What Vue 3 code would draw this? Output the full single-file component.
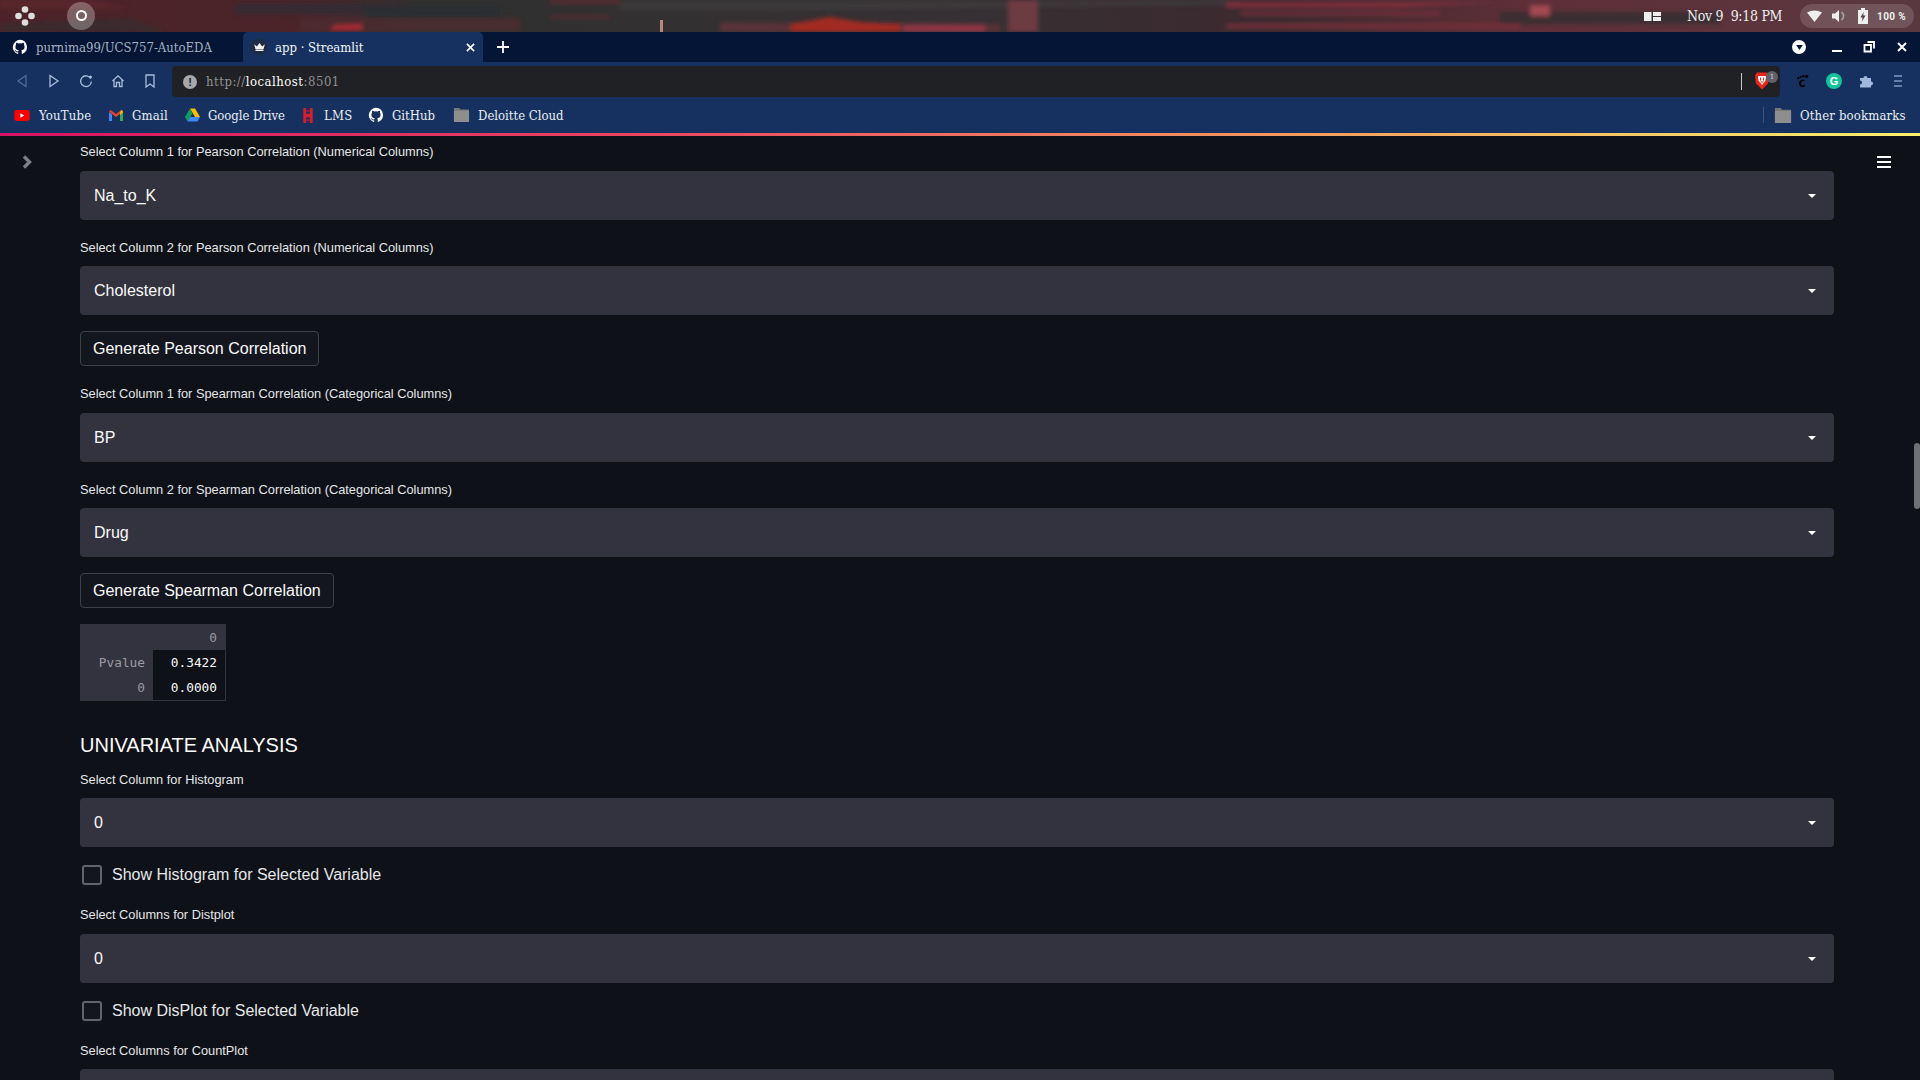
<script setup>
const bookmarks = [
  { key: 'yt', label: 'YouTube' },
  { key: 'gm', label: 'Gmail' },
  { key: 'gd', label: 'Google Drive' },
  { key: 'lms', label: 'LMS' },
  { key: 'gh', label: 'GitHub' },
  { key: 'fd', label: 'Deloitte Cloud' },
]
const ghPath = 'M12 1.3a10.9 10.9 0 0 0-3.4 21.2c.5.1.7-.2.7-.5v-2c-3 .7-3.7-1.3-3.7-1.3-.5-1.3-1.2-1.6-1.2-1.6-1-.7.1-.7.1-.7 1.1.1 1.7 1.1 1.7 1.1 1 1.7 2.6 1.2 3.2.9.1-.7.4-1.2.7-1.5-2.4-.3-5-1.2-5-5.4 0-1.2.4-2.2 1.1-2.9-.1-.3-.5-1.4.1-2.9 0 0 .9-.3 3 1.1a10.400 10.400 0 0 1 5.400 0c2.100-1.400 3-1.100 3-1.100.6 1.500.2 2.600.1 2.900.7.800 1.100 1.700 1.100 2.900 0 4.200-2.600 5.100-5 5.400.4.300.7 1 .7 2v3c0 .3.2.6.7.5A10.900 10.900 0 0 0 12 1.300z'
</script>

<template>
  <div class="screen">
    <header class="desktop-bar">
      <svg class="wall" viewBox="0 0 1920 32" preserveAspectRatio="none" aria-hidden="true">
        <defs>
          <filter id="soft"><feGaussianBlur stdDeviation="2"/></filter>
          <linearGradient id="wallgrad" x1="0" x2="1" y1="0" y2="0">
            <stop offset="0" stop-color="#4d2329"/>
            <stop offset=".16" stop-color="#4a2429"/>
            <stop offset=".22" stop-color="#30302f"/>
            <stop offset=".5" stop-color="#363034"/>
            <stop offset=".66" stop-color="#3c2a2f"/>
            <stop offset=".8" stop-color="#5f2f38"/>
            <stop offset="1" stop-color="#5a3840"/>
          </linearGradient>
        </defs>
        <rect width="1920" height="32" fill="url(#wallgrad)"/>
        <g filter="url(#soft)">
          <path d="M0 0H90L130 8H0Z" fill="#5a252b"/>
          <path d="M0 24L130 18 165 32H0Z" fill="#3a2a2d"/>
          <path d="M235 3H400V14H235Z" fill="#352c30"/>
          <path d="M365 6H500V18H365Z" fill="#2c2f30"/>
          <path d="M300 18H520V32H300Z" fill="#4e2b30" opacity=".8"/>
          <path d="M335 25L362 24V30H330Z" fill="#a82a34"/>
          <path d="M550 0H620V3H550ZM550 16H610V18H550Z" fill="#6a2c33"/>
          <path d="M620 2H1000L1240 0V4L800 10H620Z" fill="#3d3a3b"/>
          <path d="M720 22L1000 24V32H720Z" fill="#583038"/>
          <path d="M791 24L830 17 860 22 900 24V32H791Z" fill="#a32a24"/>
          <path d="M903 25H985V32H903Z" fill="#923544"/>
          <path d="M1008 0H1038V32H1008Z" fill="#6d3a42"/>
          <path d="M1226 2H1500L1400 8H1226ZM1240 12H1440V15H1240ZM1226 24H1520V28H1226Z" fill="#7c2f3a"/>
          <path d="M1500 12H1720V24H1500Z" fill="#3a2f33"/>
          <path d="M1530 5H1550V16H1530Z" fill="#a04a50"/>
        </g>
        <path d="M660 20H663V32H660Z" fill="#b8847f"/>
      </svg>
      <div class="desk-left">
        <svg class="gnome" viewBox="0 0 20 20" aria-hidden="true">
          <circle cx="10" cy="3.500" r="3.300" fill="#dedede"/><circle cx="3.500" cy="10" r="3.300" fill="#dedede"/>
          <circle cx="16.500" cy="10" r="3.300" fill="#dedede"/><circle cx="10" cy="16.500" r="3.300" fill="#dedede"/>
        </svg>
        <span class="circle-btn"><i></i></span>
      </div>
      <div class="desk-right">
        <svg class="layout-ic" viewBox="0 0 17 9" aria-hidden="true"><path d="M0 0h7.500v9H0zM9 0h8v4H9zM9 5h8v4H9z" fill="#eee"/></svg>
        <span class="clock">Nov 9&nbsp; 9:18 PM</span>
        <div class="tray">
          <svg class="t-wifi" viewBox="0 0 15 12" aria-hidden="true"><path d="M0 2.500Q7.500-1.500 15 2.500L7.500 12Z" fill="#eee"/></svg>
          <svg class="t-spk" viewBox="0 0 14 14" aria-hidden="true"><path d="M0 4.500h3L7 1v12L3 9.500H0Z" fill="#eee"/><path d="M9.500 3a5 5 0 0 1 0 8" stroke="#aaa" fill="none" stroke-width="1.500"/></svg>
          <svg class="t-bat" viewBox="0 0 10 16" aria-hidden="true"><path d="M0 2h3V0h4v2h3V16H0Z" fill="#eee"/><path d="M5.500 4L2.500 9.500H4.500L4 13.500 7.500 7.500H5.300Z" fill="#55404a"/></svg>
          <span class="pct">100 %</span>
        </div>
      </div>
    </header>

    <div class="tabs">
      <div class="tab inactive">
        <svg class="tab-ic" viewBox="0 0 24 24" aria-hidden="true"><path :d="ghPath" fill="#fff"/></svg>
        <span>purnima99/UCS757-AutoEDA</span>
      </div>
      <div class="tab active">
        <span class="crown-wrap">
          <svg viewBox="0 0 12 9" aria-hidden="true"><path d="M0 1.500L3 4 6 0 9 4 12 1.500 10.500 7H1.500ZM1.500 7.700h9V9h-9Z" fill="#f3f3f3"/></svg>
        </span>
        <span>app · Streamlit</span>
        <svg class="tab-x" viewBox="0 0 10 10" aria-hidden="true"><path d="M1 1l8 8M9 1L1 9" stroke="#fff" stroke-width="1.800"/></svg>
      </div>
      <svg class="newtab" viewBox="0 0 12 12" aria-hidden="true"><path d="M6 0v12M0 6h12" stroke="#fff" stroke-width="1.800"/></svg>
      <div class="win-ctrls">
        <span class="dl"><svg viewBox="0 0 8 6" aria-hidden="true"><path d="M0 0h8L4 6Z" fill="#04173a"/></svg></span>
        <svg class="w-ic w-min" viewBox="0 0 12 12" aria-hidden="true"><path d="M1 10h10" stroke="#fff" stroke-width="2"/></svg>
        <svg class="w-ic w-res" viewBox="0 0 12 12" aria-hidden="true"><path d="M4.500 1h6.500v6.500M1.500 4h6.500v6.500h-6.500Z" fill="none" stroke="#fff" stroke-width="1.800"/></svg>
        <svg class="w-ic w-cls" viewBox="0 0 12 12" aria-hidden="true"><path d="M2 2l8 8M10 2l-8 8" stroke="#fff" stroke-width="1.900"/></svg>
      </div>
    </div>

    <div class="toolbar">
      <div class="nav">
        <svg viewBox="0 0 14 14" aria-hidden="true"><path d="M11 1.500V12.500L3 7Z" fill="none" stroke="#4f6b95" stroke-width="1.300"/></svg>
        <svg viewBox="0 0 14 14" aria-hidden="true"><path d="M3 1.500V12.500L11 7Z" fill="none" stroke="#a9bcd9" stroke-width="1.300"/></svg>
        <svg viewBox="0 0 14 14" aria-hidden="true"><path d="M11.700 4.500A5.400 5.400 0 1 0 12.400 7.500" fill="none" stroke="#a9bcd9" stroke-width="1.300"/><circle cx="11.500" cy="3" r="1.500" fill="#a9bcd9"/></svg>
        <svg viewBox="0 0 14 14" aria-hidden="true"><path d="M1.500 7L7 1.800 12.500 7M3 6V12.500H5.500V8.500H8.500V12.500H11V6" fill="none" stroke="#a9bcd9" stroke-width="1.300"/></svg>
        <svg viewBox="0 0 14 14" aria-hidden="true"><path d="M3 1H11V13L7 10 3 13Z" fill="none" stroke="#a9bcd9" stroke-width="1.300"/></svg>
      </div>
      <div class="urlbar">
        <span class="info">!</span>
        <span class="url"><span class="dim">http://</span>localhost<span class="dim">:8501</span></span>
        <span class="url-sep"></span>
        <span class="brave">
          <svg viewBox="0 0 14 17" aria-hidden="true">
            <path d="M2 0H12L14 3 13 11 7 17 1 11 0 3Z" fill="#e8261c"/>
            <path d="M3 3.500H11L10.500 8 7 12.500 3.500 8Z" fill="#fff"/>
            <path d="M5.500 5V8M8.500 5V8M5.500 9.500H8.500" stroke="#e8261c"/>
          </svg>
          <b>1</b>
        </span>
      </div>
      <div class="ext">
        <svg class="paw" viewBox="0 0 14 14" aria-hidden="true"><path d="M9 6a4 4 0 1 0 1 6.500L9.500 11A2.300 2.300 0 1 1 9 7.500Z" fill="#000"/><circle cx="2.500" cy="4" r="1.200"/><circle cx="5" cy="2.500" r="1.200"/><circle cx="8" cy="1.800" r="1.300"/><circle cx="11.500" cy="2" r="1.700"/></svg>
        <span class="gram">G</span>
        <svg class="puzzle" viewBox="0 0 14 14" aria-hidden="true"><path d="M1 4H4.500A2 2 0 1 1 8.500 4H12V7.500A2 2 0 1 1 12 11.500V13.500H1V10.500A2 2 0 1 0 1 6.500Z" fill="#a0b8dc"/></svg>
        <svg class="kebab" viewBox="0 0 10 12" aria-hidden="true"><path d="M1 1h8M1 6h8M1 11h8" stroke="#7f9cc6" stroke-width="1.500"/></svg>
      </div>
    </div>

    <nav class="bookmarks">
      <div v-for="b in bookmarks" :key="b.key" class="bm" :class="'bm-' + b.key">
        <svg v-if="b.key === 'yt'" viewBox="0 0 14 10" aria-hidden="true"><rect width="14" height="10" rx="2.500" fill="#f00"/><path d="M5.500 3v4L9 5Z" fill="#fff"/></svg>
        <svg v-else-if="b.key === 'gm'" viewBox="0 0 14 11" aria-hidden="true"><path d="M0 2V11H3V4.500Z" fill="#4285f4"/><path d="M11 4.500V11H14V2Z" fill="#34a853"/><path d="M0 1.500L7 7 14 1.500 12.500 0 7 4 1.500 0Z" fill="#ea4335"/><path d="M11 3V5L14 2.500C14 1 13 0 12 0Z" fill="#fbbc04"/></svg>
        <svg v-else-if="b.key === 'gd'" viewBox="0 0 16 14" aria-hidden="true"><path d="M5.300 0H10.700L16 9H10.700Z" fill="#fbbc04"/><path d="M5.300 0L0 9 2.700 14 8 5Z" fill="#0f9d58"/><path d="M5.300 9H16L13.300 14H2.700Z" fill="#4285f4"/></svg>
        <svg v-else-if="b.key === 'lms'" viewBox="0 0 10 16" aria-hidden="true"><path d="M0 0H3V6H7V0H10V16H7V10H3V16H0Z" fill="#d81e2c"/><path d="M3 2H7V4H3ZM3 12H7V14H3Z" fill="#d81e2c" opacity=".6"/></svg>
        <svg v-else-if="b.key === 'gh'" viewBox="0 0 24 24" aria-hidden="true"><path :d="ghPath" fill="#fff"/></svg>
        <svg v-else viewBox="0 0 14 13" aria-hidden="true"><path d="M0 0H5L6 1.500H14V13H0Z" fill="#777"/><path d="M0 2.500H14V13H0Z" fill="#8e8e8e"/></svg>
        <span>{{ b.label }}</span>
      </div>
      <span class="bm-sep"></span>
      <div class="bm bm-other">
        <svg viewBox="0 0 14 13" aria-hidden="true"><path d="M0 0H5L6 1.500H14V13H0Z" fill="#777"/><path d="M0 2.500H14V13H0Z" fill="#8e8e8e"/></svg>
        <span>Other bookmarks</span>
      </div>
    </nav>
    <div class="rainbow"></div>

    <main class="page">
      <svg class="side-chev" viewBox="0 0 10 14" aria-hidden="true"><path d="M2 1.500L7.500 7 2 12.500" fill="none" stroke="#7d7f86" stroke-width="3.400"/></svg>
      <svg class="hamb" viewBox="0 0 14 12" aria-hidden="true"><path d="M0 1h14M0 6h14M0 11h14" stroke="#fff" stroke-width="1.800"/></svg>
      <div class="scrollbar"></div>

      <section class="content">
        <label class="lbl first">Select Column 1 for Pearson Correlation (Numerical Columns)</label>
        <div class="select"><span>Na_to_K</span><i class="caret"></i></div>
        <label class="lbl">Select Column 2 for Pearson Correlation (Numerical Columns)</label>
        <div class="select"><span>Cholesterol</span><i class="caret"></i></div>
        <button class="btn">Generate Pearson Correlation</button>

        <label class="lbl">Select Column 1 for Spearman Correlation (Categorical Columns)</label>
        <div class="select"><span>BP</span><i class="caret"></i></div>
        <label class="lbl">Select Column 2 for Spearman Correlation (Categorical Columns)</label>
        <div class="select"><span>Drug</span><i class="caret"></i></div>
        <button class="btn">Generate Spearman Correlation</button>

        <table class="df">
          <thead><tr><th class="blank"></th><th>0</th></tr></thead>
          <tbody>
            <tr><th>Pvalue</th><td>0.3422</td></tr>
            <tr><th>0</th><td>0.0000</td></tr>
          </tbody>
        </table>

        <h2 class="heading">UNIVARIATE ANALYSIS</h2>

        <label class="lbl tight">Select Column for Histogram</label>
        <div class="select"><span>0</span><i class="caret"></i></div>
        <div class="check"><i class="box"></i><span>Show Histogram for Selected Variable</span></div>
        <label class="lbl after-check">Select Columns for Distplot</label>
        <div class="select"><span>0</span><i class="caret"></i></div>
        <div class="check"><i class="box"></i><span>Show DisPlot for Selected Variable</span></div>
        <label class="lbl after-check last">Select Columns for CountPlot</label>
        <div class="select"></div>
      </section>
    </main>
  </div>
</template>

<style>
html, body { margin: 0; background: #0e1117; overflow: hidden; }
</style>

<style scoped>
.screen {
  width: 1920px;
  height: 1080px;
  display: flex;
  flex-direction: column;
  overflow: hidden;
  background: #0e1117;
  font-family: "DejaVu Serif", serif;
  font-stretch: condensed;
}
.desktop-bar {
  height: 32px;
  flex: none;
  display: flex;
  justify-content: space-between;
  align-items: center;
  position: relative;
  background: #4a2a2e;
}
.wall { position: absolute; inset: 0; width: 100%; height: 100%; }
.desk-left { position: relative; display: flex; align-items: center; padding-left: 15px; }
.gnome { width: 20px; height: 20px; }
.circle-btn {
  margin-left: 32px;
  width: 28px;
  height: 28px;
  margin-top: -1px;
  border-radius: 50%;
  background: rgba(255,255,255,.28);
  display: flex;
  align-items: center;
  justify-content: center;
}
.circle-btn i { width: 7px; height: 7px; border: 2.500px solid #fff; border-radius: 50%; }
.desk-right { position: relative; display: flex; align-items: center; padding-right: 6px; color: #eee; }
.layout-ic { width: 17px; height: 9px; margin-right: 26px; }
.clock { font-size: 14px; margin-right: 19px; width: 94px; white-space: nowrap; letter-spacing: -.3px; }
.tray {
  width: 114px;
  height: 24px;
  border-radius: 12px;
  background: rgba(255,255,255,.14);
  display: flex;
  align-items: center;
  padding-left: 7px;
  box-sizing: border-box;
}
.t-wifi { width: 15px; height: 12px; margin-right: 10px; }
.t-spk { width: 14px; height: 14px; margin-right: 12px; }
.t-bat { width: 10px; height: 16px; margin-right: 9px; }
.pct { font: 700 10px "Roboto", sans-serif; letter-spacing: .4px; white-space: nowrap; font-stretch: normal; }

.tabs { height: 30px; flex: none; background: #041536; display: flex; align-items: center; }
.tab { height: 30px; display: flex; align-items: center; box-sizing: border-box; font-size: 13px; white-space: nowrap; }
.tab.inactive { width: 243px; padding-left: 12px; color: #a7b1c2; }
.tab-ic { width: 16px; height: 16px; margin-right: 8px; flex: none; }
.tab.active { width: 240px; padding: 0 8px; background: #16315f; color: #f2f4f8; border-radius: 5px 5px 0 0; }
.crown-wrap { width: 16px; height: 16px; border-radius: 50%; background: #1e2b42; display: flex; align-items: center; justify-content: center; margin-right: 8px; }
.crown-wrap svg { width: 11px; height: 8px; }
.tab-x { width: 9px; height: 9px; margin-left: auto; }
.newtab { width: 12px; height: 12px; margin-left: 14px; }
.win-ctrls { margin-left: auto; display: flex; align-items: center; height: 30px; padding-right: 12px; }
.dl { width: 14px; height: 14px; border-radius: 50%; background: #fff; display: flex; align-items: center; justify-content: center; }
.dl svg { width: 7px; height: 5px; }
.w-ic { width: 12px; height: 12px; }
.w-min { margin-left: 25px; }
.w-res { margin-left: 20px; }
.w-cls { margin-left: 21px; }

.toolbar { height: 37px; flex: none; background: #16315f; display: flex; align-items: flex-start; box-sizing: border-box; padding-top: 4px; }
.nav { width: 172px; height: 31px; flex: none; display: flex; align-items: center; gap: 18px; padding-left: 15px; box-sizing: border-box; }
.nav svg { width: 14px; height: 14px; flex: none; margin-top: -1px; }
.urlbar {
  width: 1608px;
  height: 31px;
  flex: none;
  box-sizing: border-box;
  border-radius: 4px;
  background: #202124;
  display: flex;
  align-items: center;
  padding-left: 11px;
}
.info { width: 14px; height: 14px; border-radius: 50%; background: #a6a8ab; color: #202124; font: 700 11px/14px "Liberation Sans", sans-serif; text-align: center; }
.url { margin-left: 9px; font-size: 13px; letter-spacing: .5px; color: #fff; margin-top: -1px; }
.dim { color: #8f9194; }
.url-sep { margin-left: auto; width: 1px; height: 17px; background: #c8c8c8; }
.brave { position: relative; margin: 0 2px 0 13px; width: 23px; height: 19px; display: block; }
.brave svg { width: 14px; height: 18px; position: absolute; left: 0; top: 0; }
.brave b { position: absolute; right: 0; top: -1px; width: 12px; height: 12px; border-radius: 50%; background: #5f6068; color: #ddd; font: 400 7px/12px "DejaVu Serif", serif; text-align: center; }
.ext { flex: 1; display: flex; align-items: center; height: 31px; padding: 0 0 1px 16px; box-sizing: border-box; }
.paw { width: 13px; height: 14px; flex: none; }
.gram { margin-left: 17px; width: 16px; height: 16px; flex: none; border-radius: 50%; background: #15c39a; color: #fff; font: 700 11px/16px "Liberation Sans", sans-serif; text-align: center; }
.puzzle { margin-left: 17px; width: 14px; height: 14px; flex: none; }
.kebab { margin-left: 20px; width: 10px; height: 12px; flex: none; }

.bookmarks { height: 34px; flex: none; background: #16315f; display: flex; align-items: center; padding: 0 15px 2px 14px; box-sizing: border-box; color: #e9edf3; font-size: 13px; white-space: nowrap; }
.bm { display: flex; align-items: center; }
.bm svg { flex: none; }
.bm-yt svg { width: 16px; height: 11px; margin-right: 9px; }
.bm-yt span { width: 53px; letter-spacing: .2px; }
.bm-gm { margin-left: 17px; }
.bm-gm svg { width: 14px; height: 11px; margin-right: 9px; }
.bm-gm span { width: 36px; letter-spacing: .2px; }
.bm-gd { margin-left: 17px; }
.bm-gd svg { width: 15px; height: 14px; margin-right: 8px; }
.bm-gd span { width: 75px; letter-spacing: -.05px; }
.bm-lms { margin-left: 20px; }
.bm-lms svg { width: 10px; height: 15px; margin-right: 11px; }
.bm-lms span { width: 28px; letter-spacing: .3px; }
.bm-gh { margin-left: 16px; }
.bm-gh svg { width: 16px; height: 16px; margin-right: 8px; }
.bm-gh span { width: 43px; }
.bm-fd { margin-left: 18px; }
.bm-fd svg { width: 17px; height: 14px; margin-right: 8px; }
.bm-sep { margin-left: auto; width: 1px; height: 16px; background: #3b5580; margin-right: 10px; }
.bm-other svg { width: 18px; height: 15px; margin-right: 8px; }
.bm-other span { width: 105px; letter-spacing: .15px; }

.rainbow { height: 3px; flex: none; background: linear-gradient(90deg, #d81466 0%, #ea4560 33%, #f59a5e 67%, #fff06c 100%); }

.page { flex: 1; position: relative; overflow: hidden; background: #0e1117; }
.side-chev { position: absolute; left: 22px; top: 19px; width: 10px; height: 14px; }
.hamb { position: absolute; left: 1877px; top: 20px; width: 14px; height: 12px; }
.scrollbar { position: absolute; left: 1914px; top: 307px; width: 6px; height: 66px; border-radius: 3px; background: #6f7073; }
.content { width: 1754px; margin-left: 80px; display: flex; flex-direction: column; align-items: flex-start; font-family: "Liberation Sans", sans-serif; font-stretch: normal; color: #fafafa; }
.lbl { height: 16px; line-height: 16px; font-size: 12.800px; margin: 20px 0 10px; color: #e6e7e9; display: block; }
.lbl.first { margin-top: 8px; margin-bottom: 11px; }
.btn + .lbl { margin-bottom: 11px; }
.lbl.tight { margin-top: 15px; margin-bottom: 10px; }
.lbl.after-check { margin-top: 21px; margin-bottom: 11px; }
.lbl.last { margin-bottom: 10px; }
.select { width: 100%; height: 49px; flex: none; background: #33333f; border-radius: 4px; box-sizing: border-box; padding: 0 14px; display: flex; align-items: center; justify-content: space-between; font-size: 16px; color: #fafafa; }
.caret { width: 0; height: 0; border-left: 4px solid transparent; border-right: 4px solid transparent; border-top: 4px solid #fff; margin-right: 4px; margin-left: auto; }
.btn { margin-top: 16px; height: 35px; padding: 0 12px; font: 16px "Liberation Sans", sans-serif; color: #fafafa; background: #14161f; border: 1px solid #3f414a; border-radius: 4px; }
.df { margin-top: 16px; border-collapse: collapse; font: 12.800px/25px "DejaVu Sans Mono", monospace; border-right: 1px solid #33333f; border-bottom: 1px solid #33333f; }
.df th { background: #33333f; color: #9a9aa3; font-weight: 400; text-align: right; padding: 0 8px; height: 25px; }
.df thead th { height: 26px; }
.df th.blank { width: 57px; }
.df td { background: #0e1117; color: #fafafa; text-align: right; padding: 0 8px; width: 56px; }
.heading { margin: 32px 0 0; font: 400 20px/24px "Liberation Sans", sans-serif; color: #fafafa; }
.check { height: 24px; margin-top: 15px; display: flex; align-items: center; font-size: 16px; color: #e6e7e9; }
.check span { padding-top: 2px; }
.box { width: 16px; height: 16px; border: 2px solid #62646a; border-radius: 3px; margin: 1px 10px 0 2px; background: #14161f; }
</style>
